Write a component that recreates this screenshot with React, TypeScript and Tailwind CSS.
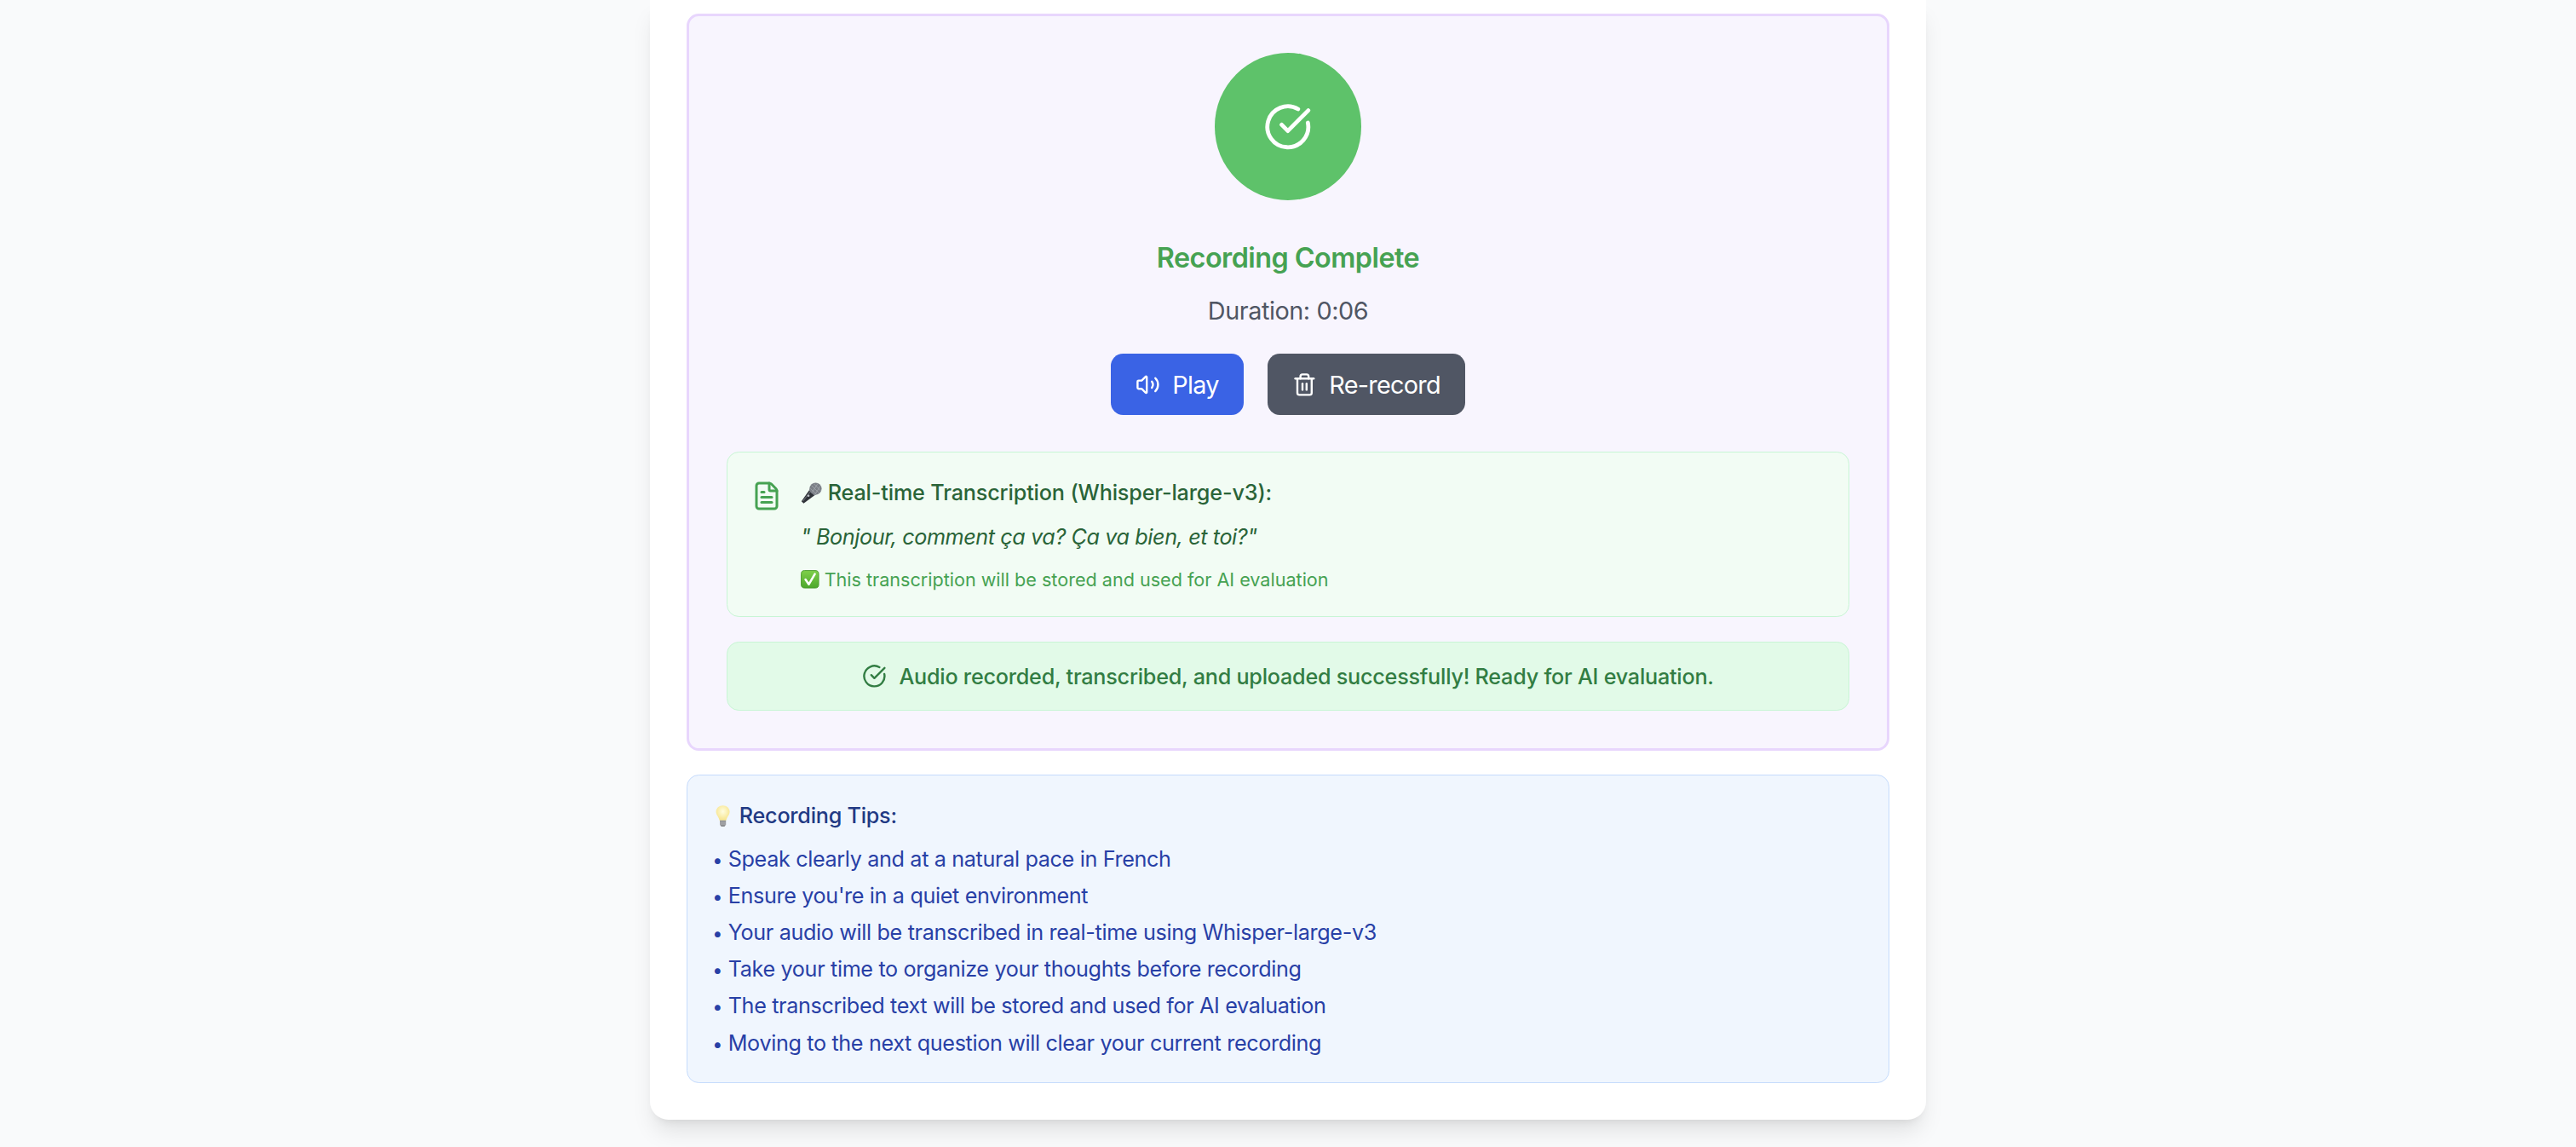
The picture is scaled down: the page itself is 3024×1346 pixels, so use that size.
import { CircleCheckBig, FileText, Trash2, Volume2 } from "lucide-react";

const tips = [
  "Speak clearly and at a natural pace in French",
  "Ensure you're in a quiet environment",
  "Your audio will be transcribed in real-time using Whisper-large-v3",
  "Take your time to organize your thoughts before recording",
  "The transcribed text will be stored and used for AI evaluation",
  "Moving to the next question will clear your current recording",
];

function MicEmoji() {
  return (
    <svg viewBox="0 0 24 24" className="inline-block h-3.5 w-3.5 align-[-2px]">
      <path d="M3.2 23.5.8 21.2 10.5 7.5 16.8 13.5Z" fill="#2f3238" />
      <path d="M2.5 21 11.5 9.5" stroke="#6d7178" strokeWidth="1" />
      <path d="M9.5 9.2 15 14.6 16.8 13.2 11 7.4Z" fill="#9a9ea5" />
      <circle cx="16.6" cy="7.2" r="6.8" fill="#7b7f86" />
      <path d="M12 3.5 20.5 12M14.5 1.5 22.5 9.5M11 7 17 13M19 1.5 13 11M22 4 16 13.5" stroke="#a9adb3" strokeWidth="0.7" />
      <circle cx="8.6" cy="15" r="1.3" fill="#b9bcc2" />
    </svg>
  );
}

function CheckEmoji() {
  return (
    <svg viewBox="0 0 24 24" className="inline-block h-3 w-3 align-[-1.5px]">
      <defs>
        <linearGradient id="checkFill" x1="0" y1="0" x2="0" y2="1">
          <stop offset="0" stopColor="#7fd04a" />
          <stop offset="1" stopColor="#4da72c" />
        </linearGradient>
      </defs>
      <rect x="0.6" y="0.6" width="22.8" height="22.8" rx="4.5" fill="url(#checkFill)" stroke="#4a9a2c" strokeWidth="1" />
      <path d="M6.2 12.2 10.6 18.6 18.4 5.2" fill="none" stroke="#fff" strokeWidth="2.8" strokeLinecap="round" strokeLinejoin="round" />
    </svg>
  );
}

function BulbEmoji() {
  return (
    <svg viewBox="0 0 24 24" className="inline-block h-3.5 w-3.5 align-[-2px]">
      <defs>
        <radialGradient id="bulbFill" cx="0.5" cy="0.4" r="0.6">
          <stop offset="0" stopColor="#fffde0" />
          <stop offset="1" stopColor="#f7e48a" />
        </radialGradient>
      </defs>
      <path d="M12 0.2c-4.3 0-7.6 3-7.6 7 0 3.7 3.2 6 3.8 9.8h7.6c.6-3.8 3.8-6.1 3.8-9.8 0-4-3.3-7-7.6-7Z" fill="url(#bulbFill)" />
      <path d="M8.6 17h6.8v4.6L13.6 24h-3.2l-1.8-2.4Z" fill="#8b8d90" />
      <path d="M8.6 19h6.8M8.6 21h6.8" stroke="#c4c5c8" strokeWidth="0.7" />
    </svg>
  );
}

export default function App() {
  return (
    <div className="h-[747.8px] w-[1680px] overflow-hidden bg-[#f9fafb] font-['Inter',sans-serif] [zoom:1.8]">
      <div className="mx-auto w-[832px] rounded-b-xl bg-white px-6 pt-[9px] pb-6 shadow-lg">
        <div className="rounded-lg border-2 border-[#e8d6fd] bg-[#f8f5fe] p-6">
          <div className="flex flex-col items-center text-center">
            <div className="mb-6 flex h-24 w-24 items-center justify-center rounded-full bg-[#5ec26a]">
              <CircleCheckBig className="h-8 w-8 text-white" />
            </div>
            <h3 className="mb-2 text-lg font-semibold tracking-[-0.017em] text-[#46a252]">Recording Complete</h3>
            <p className="mb-4 text-base tracking-[-0.015em] text-[#505664]">Duration: 0:06</p>
            <div className="flex gap-4">
              <button className="flex items-center gap-2 rounded-lg bg-[#3a63e5] px-4 py-2 text-base tracking-[-0.025em] text-white">
                <Volume2 className="h-4 w-4" />
                Play
              </button>
              <button className="flex items-center gap-2 rounded-lg bg-[#505664] px-4 py-2 text-base tracking-[-0.025em] text-white">
                <Trash2 className="h-4 w-4" />
                Re-record
              </button>
            </div>
          </div>

          <div className="mt-6 rounded-lg border border-[#c8f5d5] bg-[#f2fcf4] p-4">
            <div className="flex items-start gap-3">
              <FileText className="mt-0.5 h-5 w-5 shrink-0 text-[#46a252]" />
              <div>
                <p className="mb-2 text-sm font-medium tracking-[-0.006em] text-[#2a6438]">
                  <MicEmoji /> Real-time Transcription (Whisper-large-v3):
                </p>
                <p className="text-sm leading-relaxed tracking-[-0.016em] text-[#2a6438] italic">
                  " Bonjour, comment ça va? Ça va bien, et toi?"
                </p>
                <p className="mt-2 text-xs text-[#46a252]">
                  <CheckEmoji /> This transcription will be stored and used for AI evaluation
                </p>
              </div>
            </div>
          </div>

          <div className="mt-4 flex items-center justify-center gap-2 rounded-lg border border-[#c8f5d5] bg-[#e2fae8] p-3 text-sm font-medium tracking-[-0.0095em] text-[#327d43]">
            <CircleCheckBig className="h-4 w-4" />
            Audio recorded, transcribed, and uploaded successfully! Ready for AI evaluation.
          </div>
        </div>

        <div className="mt-4 rounded-lg border border-[#c5dbfc] bg-[#f0f6fe] p-4">
          <h4 className="mb-2 text-sm font-medium tracking-[-0.01em] text-[#223a84]">
            <BulbEmoji /> Recording Tips:
          </h4>
          <ul className="space-y-1 text-sm tracking-[-0.014em] text-[#2840a6]">
            {tips.map((tip) => (
              <li key={tip}>
                <span className="text-xs">•</span> {tip}
              </li>
            ))}
          </ul>
        </div>
      </div>
    </div>
  );
}
